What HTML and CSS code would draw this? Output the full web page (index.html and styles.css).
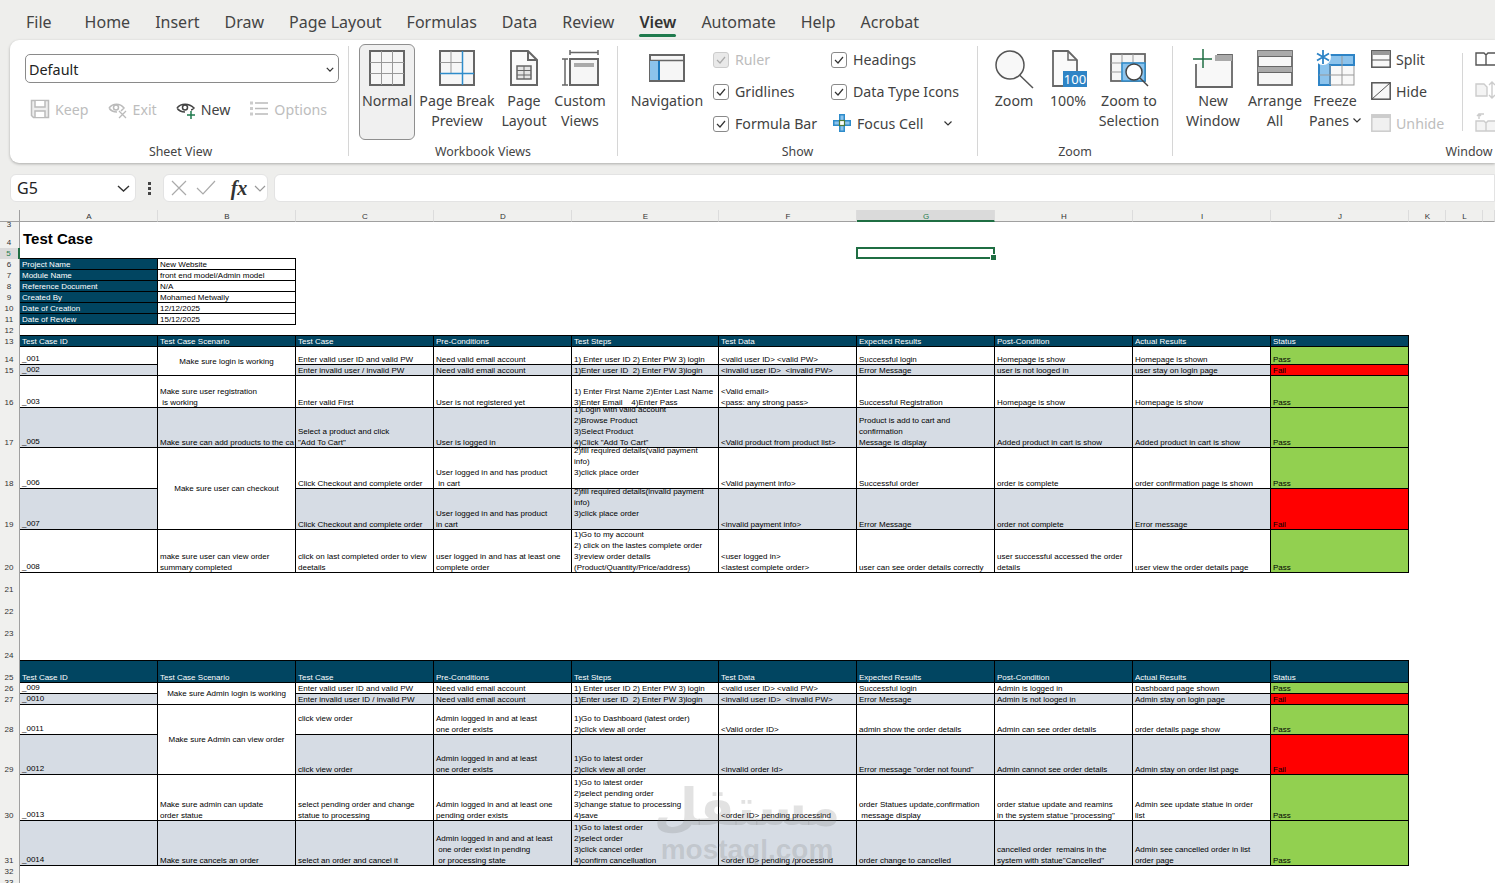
FILE: index.html
```html
<!DOCTYPE html>
<html lang="en">
<head>
<meta charset="utf-8">
<title>Test Case - Excel</title>
<link rel="stylesheet" href="styles.css">
</head>
<body>
<nav class="tabs">
  <span class="tab tab-file">File</span><span class="tab">Home</span><span class="tab">Insert</span><span class="tab">Draw</span><span class="tab">Page Layout</span><span class="tab">Formulas</span><span class="tab">Data</span><span class="tab">Review</span><span class="tab active">View</span><span class="tab">Automate</span><span class="tab">Help</span><span class="tab">Acrobat</span>
</nav>

<section class="ribbon">
  <div class="group g-sheet">
    <div class="body col">
      <div class="select"><span>Default</span><svg width="8" height="5" viewBox="0 0 10 6"><path d="M1 1l4 4 4-4" fill="none" stroke="#333" stroke-width="1.600"/></svg></div>
      <div class="sv-row">
        <span class="opt off"><svg width="20" height="20" viewBox="0 0 20 20"><path d="M1.500 1.500h17v17h-15l-2-2z" fill="#eee" stroke="#bbb" stroke-width="1.500"/><path d="M5 2v6h10V2M5 18v-6h10v6" fill="#fff" stroke="#bbb" stroke-width="1.500"/></svg>Keep</span>
        <span class="opt off"><svg width="20" height="20" viewBox="0 0 20 20"><path d="M1 9c4-5 11-5 15 0-1 1-2 2-3 3M1 9c2 3 5 4 8 4" fill="none" stroke="#bbb" stroke-width="1.500"/><circle cx="8" cy="8.500" r="2.500" fill="none" stroke="#bbb" stroke-width="1.500"/><path d="M11 12l7 7M18 12l-7 7" stroke="#bbb" stroke-width="1.300"/></svg>Exit</span>
        <span class="opt"><svg width="20" height="20" viewBox="0 0 20 20"><path d="M1 9c4-5 12-5 17 0-1 1-2 2-3 2M1 9c2 3 5 4 8 4" fill="none" stroke="#444" stroke-width="1.500"/><circle cx="9" cy="8.500" r="2.500" fill="none" stroke="#444" stroke-width="1.500"/><path d="M15 12v8M11 16h8" stroke="#1f7a4d" stroke-width="1.500"/></svg>New</span>
        <span class="opt off"><svg width="20" height="20" viewBox="0 0 20 20"><path d="M6 4h13M6 9.500h13M6 15h13" stroke="#bbb" stroke-width="1.500"/><path d="M1 2.500h3v3H1zM1 8h3v3H1zM1 13.500h3v3H1z" fill="#ccc"/></svg>Options</span>
      </div>
    </div>
    <div class="label">Sheet View</div>
  </div>
  <div class="sep"></div>

  <div class="group g-book">
    <div class="body">
      <div class="big w56 current"><svg class="bi" viewBox="0 0 40 40"><rect x="3" y="2" width="34" height="34" fill="#f6f6f6" stroke="#666" stroke-width="2"/><path d="M14.500 2v34M25.500 2v34M3 13.500h34M3 24.500h34" stroke="#999"/></svg><span>Normal</span></div>
      <div class="big w84"><svg class="bi" viewBox="0 0 40 40"><rect x="3" y="2" width="34" height="34" fill="#f6f6f6" stroke="#666" stroke-width="2"/><path d="M14 2v22M3 13.500h22" stroke="#999"/><path d="M25.500 2v34M3 24.500h34" stroke="#2e8ccb" stroke-width="1.500"/></svg><span>Page Break<br>Preview</span></div>
      <div class="big w50"><svg class="bi" viewBox="0 0 40 40"><path d="M7 2h17l9 9v25H7z" fill="#fafafa" stroke="#666" stroke-width="2"/><path d="M24 2v9h9" fill="none" stroke="#666" stroke-width="2"/><rect x="13" y="17" width="14" height="13" fill="#e4e4e4" stroke="#666" stroke-width="1.500"/><path d="M20 17v13M13 21.500h14M13 26h14" stroke="#666"/></svg><span>Page<br>Layout</span></div>
      <div class="big w62"><svg class="bi" viewBox="0 0 40 40"><path d="M10 1v5M38 1v5M10 3.500h28M2 10h6M2 36h6M5 10v26" fill="none" stroke="#666" stroke-width="1.500"/><rect x="10" y="10" width="28" height="26" fill="#f6f6f6" stroke="#666" stroke-width="2"/><rect x="14" y="14" width="20" height="4" fill="#aaa"/></svg><span>Custom<br>Views</span></div>
    </div>
    <div class="label">Workbook Views</div>
  </div>
  <div class="sep"></div>

  <div class="group g-show">
    <div class="body">
      <div class="big w90"><svg class="bi" viewBox="0 0 40 40"><rect x="3" y="6" width="34" height="26" fill="#f6f6f6" stroke="#666" stroke-width="2"/><path d="M3 11.500h34" stroke="#666" stroke-width="1.500"/><rect x="3" y="12" width="9" height="19" fill="#8cc3ec"/><rect x="11" y="12" width="2" height="19" fill="#1b78bd"/></svg><span>Navigation</span></div>
      <div class="checks c1">
        <label class="chk off"><i class="box"><svg width="10" height="8" viewBox="0 0 10 8"><path d="M1 4l3 3 5-6" fill="none" stroke="#aaa" stroke-width="1.200"/></svg></i>Ruler</label>
        <label class="chk"><i class="box"><svg width="10" height="8" viewBox="0 0 10 8"><path d="M1 4l3 3 5-6" fill="none" stroke="#333" stroke-width="1.200"/></svg></i>Gridlines</label>
        <label class="chk"><i class="box"><svg width="10" height="8" viewBox="0 0 10 8"><path d="M1 4l3 3 5-6" fill="none" stroke="#333" stroke-width="1.200"/></svg></i>Formula Bar</label>
      </div>
      <div class="checks">
        <label class="chk"><i class="box"><svg width="10" height="8" viewBox="0 0 10 8"><path d="M1 4l3 3 5-6" fill="none" stroke="#333" stroke-width="1.200"/></svg></i>Headings</label>
        <label class="chk"><i class="box"><svg width="10" height="8" viewBox="0 0 10 8"><path d="M1 4l3 3 5-6" fill="none" stroke="#333" stroke-width="1.200"/></svg></i>Data Type Icons</label>
        <label class="chk focus"><svg width="18" height="18" viewBox="0 0 18 18"><path d="M6 0h6v6h6v6h-6v6H6v-6H0V6h6z" fill="#2e8ccb"/><path d="M7.500 1.500h3V6h-3zM7.500 12h3v4.500h-3zM1.500 7.500H6v3H1.500zM12 7.500h4.500v3H12z" fill="#8cc3ec"/><rect x="6.500" y="6.500" width="5" height="5" fill="#fff" stroke="#4d7a3a" stroke-width="1.200"/></svg>Focus Cell<svg class="fc-chev" width="8" height="5" viewBox="0 0 8 5"><path d="M.5.500L4 4 7.500.500" fill="none" stroke="#333" stroke-width="1.200"/></svg></label>
      </div>
    </div>
    <div class="label">Show</div>
  </div>
  <div class="sep"></div>

  <div class="group g-zoom">
    <div class="body">
      <div class="big w52"><svg class="bi" viewBox="0 0 40 40"><circle cx="16" cy="16" r="14" fill="#f8f8f8" stroke="#555" stroke-width="1.500"/><path d="M25.500 26L39 39" stroke="#555" stroke-width="1.500"/></svg><span>Zoom</span></div>
      <div class="big w56"><svg class="bi" viewBox="0 0 40 40"><path d="M5 2h15l9 9v26H5z" fill="#fafafa" stroke="#666" stroke-width="1.800"/><path d="M20 2v9h9" fill="none" stroke="#666" stroke-width="1.500"/><rect x="15" y="22" width="24" height="16" fill="#2e84c6"/><text x="27" y="35" class="pct">100</text></svg><span>100%</span></div>
      <div class="big w66"><svg class="bi" viewBox="0 0 40 40"><rect x="2" y="5" width="34" height="27" fill="#f6f6f6" stroke="#666" stroke-width="1.800"/><path d="M13 5v27M24 5v27M2 14h34M2 23h34" stroke="#999"/><path d="M13 14h23v18H13z" fill="#8cc3ec" stroke="#2e8ccb" stroke-width="1.500"/><circle cx="25" cy="23" r="8" fill="#fff" stroke="#444" stroke-width="1.500"/><path d="M31 29l8 8" stroke="#444" stroke-width="1.500"/></svg><span>Zoom to<br>Selection</span></div>
    </div>
    <div class="label">Zoom</div>
  </div>
  <div class="sep"></div>

  <div class="group g-win">
    <div class="body">
      <div class="big w60"><svg class="bi" viewBox="0 0 40 40"><path d="M3 15v23h36V6H24" fill="#f8f8f8" stroke="#666" stroke-width="1.800"/><rect x="22" y="6" width="17" height="6" fill="#aaa"/><path d="M10 0v19M0 10h19" stroke="#1f6e43" stroke-width="1.500"/></svg><span>New<br>Window</span></div>
      <div class="big w64"><svg class="bi" viewBox="0 0 40 40"><rect x="3" y="2" width="34" height="34" fill="#f6f6f6" stroke="#666" stroke-width="1.800"/><rect x="3" y="2" width="34" height="5" fill="#aaa"/><rect x="3" y="18" width="34" height="5" fill="#aaa"/><path d="M3 7.500h34M3 17.500h34M3 23.500h34" stroke="#666"/></svg><span>Arrange<br>All</span></div>
      <div class="big w56"><svg class="bi" viewBox="0 0 40 40"><rect x="4" y="7" width="35" height="29" fill="#f8f8f8" stroke="#999"/><path d="M4 7h35v9H15v20H4z" fill="#8cc3ec"/><path d="M4 6h35v10H15v20H4z" fill="none" stroke="#2e84c6" stroke-width="2"/><path d="M15 16v20M27 7v29M4 26h35" stroke="#999"/><circle cx="8" cy="8" r="8" fill="#fff"/><path d="M8 1v14M2 4.500l12 7M14 4.500l-12 7" stroke="#2e84c6" stroke-width="1.800"/></svg><span class="panes">Freeze<br>Panes<svg width="8" height="5" viewBox="0 0 8 5"><path d="M.5.500L4 4 7.500.500" fill="none" stroke="#333" stroke-width="1.200"/></svg></span></div>
      <div class="checks win-col">
        <span class="opt"><svg width="20" height="18" viewBox="0 0 20 18"><rect x=".800" y=".800" width="18.400" height="16.400" fill="#f8f8f8" stroke="#555" stroke-width="1.500"/><rect x="1" y="1" width="18" height="4" fill="#999"/><path d="M1 10h18" stroke="#555"/></svg>Split</span>
        <span class="opt"><svg width="20" height="18" viewBox="0 0 20 18"><rect x=".800" y=".800" width="18.400" height="16.400" fill="#f8f8f8" stroke="#555" stroke-width="1.500"/><path d="M1 17L19 1" stroke="#555"/></svg>Hide</span>
        <span class="opt off"><svg width="20" height="18" viewBox="0 0 20 18"><rect x=".800" y=".800" width="18.400" height="16.400" fill="#f0f0f0" stroke="#ccc" stroke-width="1.500"/><rect x="1" y="1" width="18" height="3" fill="#ccc"/></svg>Unhide</span>
      </div>
      <div class="sep-in"></div>
      <div class="checks edge-col">
        <svg width="22" height="18" viewBox="0 0 22 18"><path d="M1 4h8l2 2v10H1zM11 6l2-2h8v12H11" fill="#fff" stroke="#555" stroke-width="1.400"/></svg>
        <svg width="22" height="20" viewBox="0 0 22 20"><path d="M1 4h8l3 3v9H1z" fill="#f4f4f4" stroke="#ccc" stroke-width="1.400"/><path d="M17 2v16M14 5l3-3 3 3M14 15l3 3 3-3" fill="none" stroke="#ccc" stroke-width="1.400"/></svg>
        <svg width="22" height="20" viewBox="0 0 22 20"><path d="M1 9h8l2 2v8H1zM11 11l2-2h8v10H11" fill="#f4f4f4" stroke="#ccc" stroke-width="1.400"/><path d="M4 7V2h5M2 4l2-2 2 2" fill="none" stroke="#ccc" stroke-width="1.400"/></svg>
      </div>
    </div>
    <div class="label">Window</div>
  </div>
</section>

<section class="fbar">
  <div class="namebox"><span>G5</span><svg width="13" height="7" viewBox="0 0 13 7"><path d="M1 1l5.500 5L12 1" fill="none" stroke="#333" stroke-width="1.400"/></svg></div>
  <div class="dots"><i></i><i></i><i></i></div>
  <div class="fxbox">
    <svg width="16" height="16" viewBox="0 0 16 16"><path d="M1 1l14 14M15 1L1 15" stroke="#aaa" stroke-width="1.200"/></svg>
    <svg width="20" height="16" viewBox="0 0 20 16"><path d="M1 8l6 6L19 1" fill="none" stroke="#aaa" stroke-width="1.200"/></svg>
    <span class="fx">fx</span>
    <svg width="12" height="7" viewBox="0 0 12 7"><path d="M1 1l5 5 5-5" fill="none" stroke="#999" stroke-width="1.200"/></svg>
  </div>
  <div class="finput"></div>
</section>

<main class="sheet">
  <div class="ch corner"></div><div class="ch">A</div><div class="ch">B</div><div class="ch">C</div><div class="ch">D</div><div class="ch">E</div><div class="ch">F</div><div class="ch sel">G</div><div class="ch">H</div><div class="ch">I</div><div class="ch">J</div><div class="ch">K</div><div class="ch">L</div><div class="ch"></div>

  <div class="r">3</div>
  <div class="r">4</div><div class="title">Test Case</div>
  <div class="r sel">5</div><div class="selcell"></div>

  <div class="r">6</div><div class="c h t">Project Name</div><div class="c t">New Website</div>
  <div class="r">7</div><div class="c h">Module Name</div><div class="c">front end model/Admin model</div>
  <div class="r">8</div><div class="c h">Reference Document</div><div class="c">N/A</div>
  <div class="r">9</div><div class="c h">Created By</div><div class="c">Mohamed Metwally</div>
  <div class="r">10</div><div class="c h">Date of Creation</div><div class="c">12/12/2025</div>
  <div class="r">11</div><div class="c h">Date of Review</div><div class="c">15/12/2025</div>
  <div class="r">12</div>

  <div class="r">13</div><div class="c h t">Test Case ID</div><div class="c h t">Test Case Scenario</div><div class="c h t">Test Case</div><div class="c h t">Pre-Conditions</div><div class="c h t">Test Steps</div><div class="c h t">Test Data</div><div class="c h t">Expected Results</div><div class="c h t">Post-Condition</div><div class="c h t">Actual Results</div><div class="c h t">Status</div>

  <div class="r">14</div><div class="c">_001</div><div class="c m s2">Make sure login is working</div><div class="c">Enter valid user ID and valid PW</div><div class="c">Need valid email account</div><div class="c">1) Enter user ID 2) Enter PW 3) login</div><div class="c">&lt;valid user ID&gt; &lt;valid PW&gt;</div><div class="c">Successful login</div><div class="c">Homepage is show</div><div class="c">Homepage is shown</div><div class="c p">Pass</div>

  <div class="r">15</div><div class="c b">_002</div><div class="c b">Enter invalid user / invalid PW</div><div class="c b">Need valid email account</div><div class="c b">1)Enter user ID&nbsp; 2) Enter PW 3)login</div><div class="c b">&lt;invalid user ID&gt;&nbsp; &lt;invalid PW&gt;</div><div class="c b">Error Message</div><div class="c b">user is not looged in</div><div class="c b">user stay on login page</div><div class="c f">Fail</div>

  <div class="r">16</div><div class="c">_003</div><div class="c">Make sure user registration<br>&nbsp;is working</div><div class="c">Enter valid First</div><div class="c">User is not registered yet</div><div class="c">1) Enter First Name 2)Enter Last Name<br>3)Enter Email&nbsp;&nbsp;&nbsp; 4)Enter Pass</div><div class="c">&lt;Valid email&gt;<br>&lt;pass: any strong pass&gt;</div><div class="c">Successful Registration</div><div class="c">Homepage is show</div><div class="c">Homepage is show</div><div class="c p">Pass</div>

  <div class="r">17</div><div class="c b">_005</div><div class="c b clip">Make sure can add products to the ca</div><div class="c b">Select a product and click<br>"Add To Cart"</div><div class="c b">User is logged in</div><div class="c b">1)Login with valid account<br>2)Browse Product<br>3)Select Product<br>4)Click "Add To Cart"</div><div class="c b">&lt;Valid product from product list&gt;</div><div class="c b">Product is add to cart and<br>confirmation<br>Message is display</div><div class="c b">Added product in cart is show</div><div class="c b">Added product in cart is show</div><div class="c p">Pass</div>

  <div class="r">18</div><div class="c">_006</div><div class="c m s2">Make sure user can checkout</div><div class="c">Click Checkout and complete order</div><div class="c">User logged in and has product<br>&nbsp;in cart</div><div class="c">2)fill required details(valid payment<br>info)<br>3)click place order<br>&nbsp;</div><div class="c">&lt;Valid payment info&gt;</div><div class="c">Successful order</div><div class="c">order is complete</div><div class="c">order confirmation page is shown</div><div class="c p">Pass</div>

  <div class="r">19</div><div class="c b">_007</div><div class="c b">Click Checkout and complete order</div><div class="c b">User logged in and has product<br>in cart</div><div class="c b">2)fill required details(invalid payment<br>info)<br>3)click place order<br>&nbsp;</div><div class="c b">&lt;invalid payment info&gt;</div><div class="c b">Error Message</div><div class="c b">order not complete</div><div class="c b">Error message</div><div class="c f">Fail</div>

  <div class="r">20</div><div class="c">_008</div><div class="c">make sure user can view order<br>summary completed</div><div class="c">click on last completed order to view<br>deetails</div><div class="c">user logged in and has at least one<br>complete order</div><div class="c">1)Go to my account<br>2) click on the lastes complete order<br>3)review order details<br>(Product/Quantity/Price/address)</div><div class="c">&lt;user logged in&gt;<br>&lt;lastest complete order&gt;</div><div class="c">user can see order details correctly</div><div class="c">user successful accessed the order<br>details</div><div class="c">user view the order details page</div><div class="c p">Pass</div>

  <div class="r">21</div>
  <div class="r">22</div>
  <div class="r">23</div>
  <div class="r">24</div>

  <div class="r">25</div><div class="c h t">Test Case ID</div><div class="c h t">Test Case Scenario</div><div class="c h t">Test Case</div><div class="c h t">Pre-Conditions</div><div class="c h t">Test Steps</div><div class="c h t">Test Data</div><div class="c h t">Expected Results</div><div class="c h t">Post-Condition</div><div class="c h t">Actual Results</div><div class="c h t">Status</div>

  <div class="r">26</div><div class="c">_009</div><div class="c m s2">Make sure Admin login is working</div><div class="c">Enter valid user ID and valid PW</div><div class="c">Need valid email account</div><div class="c">1) Enter user ID 2) Enter PW 3) login</div><div class="c">&lt;valid user ID&gt; &lt;valid PW&gt;</div><div class="c">Successful login</div><div class="c">Admin is logged in</div><div class="c">Dashboard page shown</div><div class="c p">Pass</div>

  <div class="r">27</div><div class="c b">_0010</div><div class="c b">Enter invalid user ID / invalid PW</div><div class="c b">Need valid email account</div><div class="c b">1)Enter user ID&nbsp; 2) Enter PW 3)login</div><div class="c b">&lt;invalid user ID&gt;&nbsp; &lt;invalid PW&gt;</div><div class="c b">Error Message</div><div class="c b">Admin is not looged in</div><div class="c b">Admin stay on login page</div><div class="c f">Fail</div>

  <div class="r">28</div><div class="c">_0011</div><div class="c m s2">Make sure Admin can view order</div><div class="c">click view order<br>&nbsp;</div><div class="c">Admin logged in and at least<br>one order exists</div><div class="c">1)Go to Dashboard (latest order)<br>2)click view all order</div><div class="c">&lt;Valid order ID&gt;</div><div class="c">admin show the order details</div><div class="c">Admin can see order details</div><div class="c">order details page show</div><div class="c p">Pass</div>

  <div class="r">29</div><div class="c b">_0012</div><div class="c b">click view order</div><div class="c b">Admin logged in and at least<br>one order exists</div><div class="c b">1)Go to latest order<br>2)click view all order</div><div class="c b">&lt;invalid order Id&gt;</div><div class="c b">Error message "order not found"</div><div class="c b">Admin cannot see order details</div><div class="c b">Admin stay on order list page</div><div class="c f">Fail</div>

  <div class="r">30</div><div class="c">_0013</div><div class="c">Make sure admin can update<br>order statue</div><div class="c">select pending order and change<br>statue to processing</div><div class="c">Admin logged in and at least one<br>pending order exists</div><div class="c">1)Go to latest order<br>2)select pending order<br>3)change statue to processing<br>4)save</div><div class="c">&lt;order ID&gt; pending processind</div><div class="c">order Statues update,confirmation<br>&nbsp;message display</div><div class="c">order statue update and reamins<br>in the system statue "processing"</div><div class="c">Admin see update statue in order<br>list</div><div class="c p">Pass</div>

  <div class="r">31</div><div class="c b">_0014</div><div class="c b">Make sure cancels an order</div><div class="c b">select an order and cancel it</div><div class="c b">Admin logged in and and at least<br>&nbsp;one order exist in pending<br>&nbsp;or processing state</div><div class="c b">1)Go to latest order<br>2)select order<br>3)click cancel order<br>4)confirm cancelluation</div><div class="c b">&lt;order ID&gt; pending /processind</div><div class="c b">order change to cancelled</div><div class="c b">cancelled order&nbsp; remains in the<br>system with statue"Cancelled"</div><div class="c b">Admin see cancelled order in list<br>order page</div><div class="c p">Pass</div>

  <div class="r">32</div>
  <div class="r">33</div>

  <div class="watermark" aria-hidden="true"><span class="wm-ar">مستقل</span><span class="wm-en">mostaql.com</span></div>
</main>
</body>
</html>
```

FILE: styles.css
```css
* { box-sizing: border-box; }
html, body { margin: 0; height: 100%; }
body {
  width: 1495px;
  height: 883px;
  overflow: hidden;
  background: #eeeeec;
  color: #424242;
  font-family: "Noto Sans", "Open Sans", sans-serif;
  font-size: 14.2px;
}

/* tabs */
.tabs { height: 40px; display: flex; align-items: flex-start; gap: 25px; padding: 11px 0 0 26px; }
.tab { font-size: 16px; line-height: 22px; color: #444; position: relative; white-space: nowrap; }
.tab-file { margin-right: 8px; }
.tab.active { font-weight: 600; color: #333; }
.tab.active::after { content: ""; position: absolute; left: 0; right: 0; top: 23px; height: 3px; border-radius: 2px; background: #1f7a4d; }

/* ribbon */
.ribbon {
  margin-left: 10px;
  width: 1485px;
  height: 123px;
  display: flex;
  padding-top: 4px;
  background: #fff;
  border-radius: 9px 0 0 9px;
  box-shadow: 0 1px 3px rgba(0, 0, 0, .28);
  overflow: hidden;
}
.group { display: flex; flex-direction: column; flex: none; }
.g-sheet { width: 338px; }
.g-book { width: 268px; }
.g-show { width: 359px; }
.g-zoom { width: 194px; }
.g-win { width: 592px; }
.body { height: 98px; display: flex; padding-left: 10px; }
.label { height: 20px; line-height: 20px; text-align: center; font-size: 12.4px; color: #444; }
.g-sheet .label { padding-left: 3px; }
.sep { flex: none; width: 1px; height: 110px; margin-top: 2px; background: #d6d6d6; }
.sep-in { flex: none; width: 1px; height: 78px; margin: 9px 12px 0 0; background: #d6d6d6; }

.col { flex-direction: column; padding-left: 15px; }
.select {
  width: 314px;
  height: 29px;
  margin-top: 10px;
  padding: 1px 4px 0 3px;
  display: flex;
  align-items: center;
  justify-content: space-between;
  border: 1px solid #8a8a8a;
  border-radius: 5px;
  font-size: 14.4px;
  color: #222;
}
.sv-row { display: flex; gap: 19px; margin: 14px 0 0 5px; }

.opt { display: flex; align-items: center; gap: 5px; height: 24px; white-space: nowrap; color: #424242; }
.opt.off { color: #bdbdbd; }

.big { flex: none; display: flex; flex-direction: column; align-items: center; text-align: center; padding-top: 5px; line-height: 20px; white-space: nowrap; }
.big .bi { width: 40px; height: 40px; margin-bottom: 2px; }
.w50 { width: 50px; } .w52 { width: 52px; } .w56 { width: 56px; } .w60 { width: 60px; }
.w62 { width: 62px; } .w64 { width: 64px; } .w66 { width: 66px; } .w84 { width: 84px; } .w90 { width: 90px; }
.current { height: 96px; background: #f0f0f0; border: 1px solid #8f8f8f; border-radius: 6px; padding-top: 4px; }
.g-show .body { padding-left: 4px; }
.g-show .w90 { margin-right: 1px; }
.pct { font: 13px "Noto Sans", sans-serif; fill: #fff; text-anchor: middle; }
.panes svg { margin-left: 4px; vertical-align: 3px; }

.checks { flex: none; display: flex; flex-direction: column; margin-top: -1px; }
.checks > * { height: 32px; }
.c1 { width: 118px; }
.chk { display: flex; align-items: center; gap: 6px; white-space: nowrap; }
.chk.off { color: #bdbdbd; }
.box { flex: none; width: 16px; height: 16px; margin-top: 1px; display: flex; align-items: center; justify-content: center; border: 1px solid #8a8a8a; border-radius: 3px; }
.chk.off .box { background: #e9e9e9; border-color: #ccc; }
.focus { margin-left: 2px; }
.fc-chev { margin-left: 15px; }
.win-col { width: 91px; margin-left: 8px; }
.edge-col svg { display: block; height: 20px; margin: 5px 0 7px; }

/* formula bar */
.fbar { height: 28px; margin-top: 11px; display: flex; padding-left: 10px; }
.namebox, .fxbox, .finput { background: #fff; border: 1px solid #e3e3e3; border-radius: 6px; }
.namebox { width: 126px; padding: 0 5px 0 6px; display: flex; align-items: center; justify-content: space-between; font-size: 16px; color: #222; }
.dots { width: 27px; display: flex; flex-direction: column; align-items: center; justify-content: center; gap: 2px; }
.dots i { width: 3px; height: 3px; background: #444; }
.fxbox { width: 105px; display: flex; align-items: center; padding-left: 7px; gap: 9px; }
.fx { width: 24px; font: italic bold 20px "Liberation Serif", serif; color: #333; text-align: center; margin-left: 2px; margin-right: -6px; }
.finput { flex: 1; margin-left: 6px; border-radius: 6px 0 0 6px; }

/* sheet */
.sheet {
  position: relative;
  height: 673px;
  margin-top: 8px;
  overflow: hidden;
  background: #fff;
  display: grid;
  grid-template-columns: 20px repeat(4, 138px) 147px repeat(5, 138px) 37px 37px 1fr;
  grid-template-rows: 12px 8px 18px repeat(9, 11px) 18px 11px 32px 40px 41px 41px 43px repeat(5, 22px) 11px 11px 30px 40px 46px 45px 11px 11px;
  font-family: "Liberation Sans", Arial, sans-serif;
  font-size: 8px;
  line-height: 11px;
  color: #000;
}
.ch { background: #f0f0ee; border-bottom: 1px solid #a0a0a0; border-right: 1px solid #dcdcdc; text-align: center; color: #333; line-height: 13px; padding-left: 1px; }
.ch.corner { border-right: 1px solid #a0a0a0; }
.ch.sel { background: #dadada; color: #1f7a4d; border-bottom: 2px solid #1f6e43; }
.r {
  grid-column: 1;
  display: flex;
  align-items: flex-end;
  justify-content: center;
  overflow: hidden;
  background: #f0f0ee;
  border-right: 1px solid #a0a0a0;
  color: #333;
  padding-right: 1px;
}
.r.sel { background: #dadada; color: #1f7a4d; border-right: 2px solid #1f6e43; }
.title { grid-column: 2; display: flex; align-items: flex-end; padding-left: 3px; font-size: 15px; font-weight: 700; line-height: 18px; white-space: nowrap; }
.selcell { grid-column: 8; position: relative; }
.selcell::before { content: ""; position: absolute; left: -1px; right: 0; top: -1px; bottom: 0; border: 2px solid #1f6e43; }
.selcell::after { content: ""; position: absolute; right: -2px; bottom: -2px; width: 5px; height: 5px; background: #1f6e43; border: 1px solid #fff; }

.c {
  display: flex;
  flex-direction: column;
  justify-content: flex-end;
  padding-left: 2px;
  overflow: hidden;
  white-space: nowrap;
  background: #fff;
  border-right: 1px solid #000;
  border-bottom: 1px solid #000;
}
.c::after { content: ""; margin-bottom: -1px; }
.r + .c:not(.h)::after { display: none; }
.h { background: #014561; color: #fff; }
.t { box-shadow: 0 -1px 0 #000; }
.b { background: #d6dce4; }
.p { background: #92d050; }
.f { background: #ff0000; }
.m { justify-content: center; align-items: center; padding-left: 0; }
.m::after { display: none; }
.s2 { grid-row: span 2; }

.watermark { position: absolute; left: 654px; top: 570px; width: 186px; display: flex; flex-direction: column; align-items: center; color: rgba(110, 110, 110, .2); pointer-events: none; }
.wm-ar { font: 700 51px/56px "DejaVu Sans", sans-serif; }
.wm-en { font: 700 28px/28px "Liberation Sans", sans-serif; }
```
